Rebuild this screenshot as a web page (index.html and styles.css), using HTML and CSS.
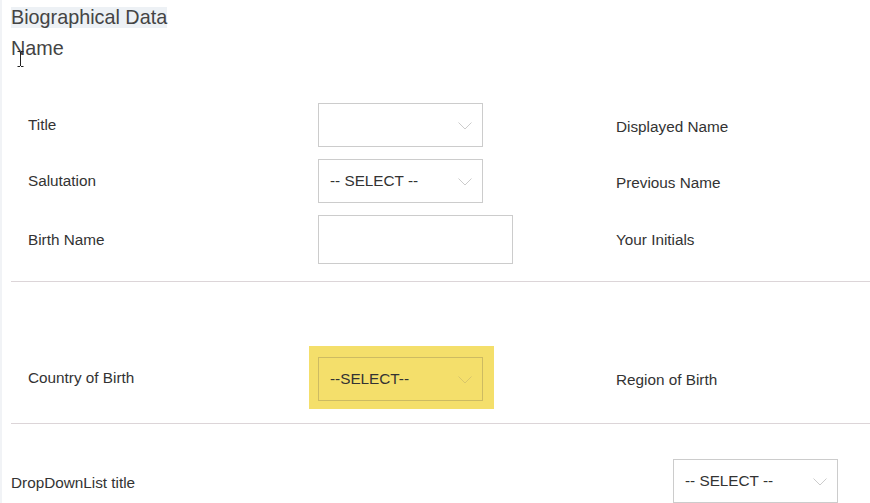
FILE: index.html
```html
<!DOCTYPE html>
<html>
<head>
<meta charset="utf-8">
<link rel="stylesheet" href="styles.css">
</head>
<body>
<div class="page">
  <div class="heading"><span class="heading-hl">Biographical Data</span></div>
  <div class="subheading">Name
    <svg class="cursor" width="7" height="16" viewBox="0 0 7 16"><path d="M0.5 0.5h2.5M4 0.5h2.5M3.5 1v14M0.5 15.5h2.5M4 15.5h2.5" stroke="#222" stroke-width="1" fill="none"/></svg>
  </div>

  <div class="section first">
    <div class="row">
      <div class="label">Title</div>
      <div class="field"><div class="select"><span class="value"></span><svg class="chev" width="14" height="8" viewBox="0 0 14 8"><path d="M0.5 0.5L7 7L13.5 0.5" stroke="#ccc" fill="none"/></svg></div></div>
      <div class="rlabel">Displayed Name</div>
    </div>
    <div class="row">
      <div class="label">Salutation</div>
      <div class="field"><div class="select"><span class="value">-- SELECT --</span><svg class="chev" width="14" height="8" viewBox="0 0 14 8"><path d="M0.5 0.5L7 7L13.5 0.5" stroke="#ccc" fill="none"/></svg></div></div>
      <div class="rlabel">Previous Name</div>
    </div>
    <div class="row tall">
      <div class="label">Birth Name</div>
      <div class="field"><div class="input"></div></div>
      <div class="rlabel r3">Your Initials</div>
    </div>
  </div>
  <div class="divider"></div>

  <div class="section second">
    <div class="row hlrow">
      <div class="label">Country of Birth</div>
      <div class="field"><div class="hl"><div class="select yellow"><span class="value">--SELECT--</span><svg class="chev" width="14" height="8" viewBox="0 0 14 8"><path d="M0.5 0.5L7 7L13.5 0.5" stroke="#d9c66a" fill="none"/></svg></div></div></div>
      <div class="rlabel r4">Region of Birth</div>
    </div>
  </div>
  <div class="divider"></div>

  <div class="row last">
    <div class="label2">DropDownList title</div>
    <div class="select"><span class="value">-- SELECT --</span><svg class="chev" width="14" height="8" viewBox="0 0 14 8"><path d="M0.5 0.5L7 7L13.5 0.5" stroke="#ccc" fill="none"/></svg></div>
  </div>
</div>
</body>
</html>
```

FILE: styles.css
```css
html, body {
  margin: 0;
  padding: 0;
  background: #fff;
  font-family: "Liberation Sans", Arial, sans-serif;
  color: #333;
  overflow: hidden;
}
.page {
  border-left: 2px solid #f1f3f6;
  padding-left: 9px;
  height: 503px;
  box-sizing: border-box;
}
.heading {
  padding-top: 7px;
  font-size: 19.8px;
  line-height: 21px;
  color: #444;
}
.heading-hl {
  background: #edf1f5;
  display: inline-block;
}
.subheading {
  position: relative;
  margin-top: 10px;
  font-size: 19.8px;
  line-height: 21px;
  color: #444;
}
.cursor {
  position: absolute;
  left: 6px;
  top: 13px;
}
.section.first {
  margin-top: 44px;
  display: flex;
  flex-direction: column;
  gap: 12px;
}
.row {
  display: flex;
  align-items: center;
  height: 44px;
}
.row.tall {
  height: 49px;
}
.label {
  width: 290px;
  padding-left: 17px;
  font-size: 15.3px;
}
.field {
  width: 298px;
  display: flex;
  align-items: center;
}
.rlabel {
  font-size: 15.3px;
  padding-top: 4px;
}
.rlabel.r3 { padding-top: 0; }
.rlabel.r4 { padding-top: 5px; }
.select {
  width: 165px;
  height: 44px;
  box-sizing: border-box;
  border: 1px solid #ccc;
  display: flex;
  align-items: center;
  justify-content: space-between;
  padding: 0 10px 0 11px;
  font-size: 15.3px;
  color: #333;
  background: #fff;
}
.chev {
  margin-top: 2px;
}
.input {
  width: 195px;
  height: 49px;
  box-sizing: border-box;
  border: 1px solid #ccc;
}
.divider {
  height: 1px;
  background: #dcd5d8;
  margin-top: 17px;
}
.section.second {
  margin-top: 64px;
}
.hlrow {
  height: 63px;
}
.field .hl {
  margin-left: -9px;
  background: #f4df6b;
  padding: 11px 11px 8px 9px;
}
.select.yellow {
  background: #f4df6b;
  border-color: #cdbb62;
  padding-left: 11px;
}
.second + .divider {
  margin-top: 14px;
}
.row.last {
  margin-top: 35px;
  align-items: flex-start;
}
.label2 {
  width: 662px;
  font-size: 15.3px;
  padding-top: 15px;
}
```
